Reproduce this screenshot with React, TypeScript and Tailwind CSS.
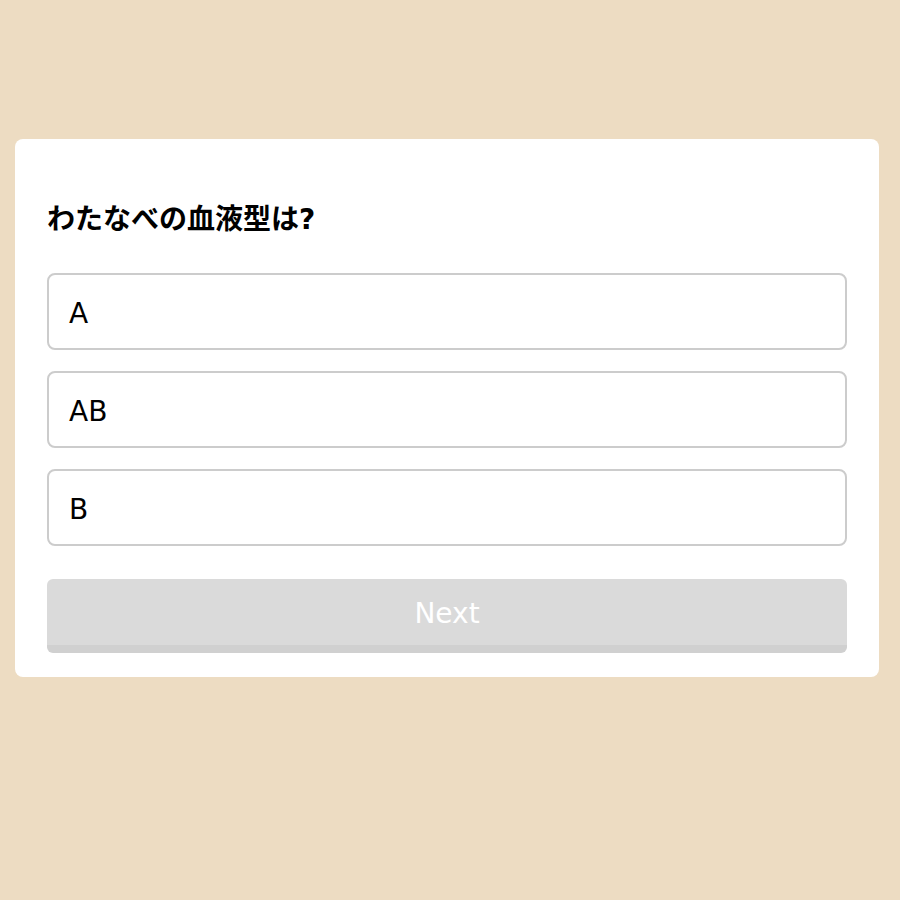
export default function App() {
  const opts = ["A", "AB", "B"];
  return (
    <div
      className="w-[900px] h-[900px] bg-[#eddcc2] pt-[139px] pl-[15px]"
      style={{ fontFamily: '"DejaVu Sans", "Noto Sans CJK JP", sans-serif' }}
    >
      <div className="w-[864px] bg-white rounded-lg px-8 pt-[56px] pb-6">
        <h1 className="text-[28px] font-bold text-black leading-[50px] h-[44px]">わたなべの血液型は?</h1>
        <div className="mt-[34px] flex flex-col gap-[21px]">
          {opts.map((o) => (
            <div
              key={o}
              className="h-[77px] border-2 border-[#cccccc] rounded-lg flex items-center pl-5 pt-[4px] text-[28px] text-black"
            >
              {o}
            </div>
          ))}
        </div>
        <div className="mt-[33px] h-[74px] rounded-md bg-[#dadada] border-b-[8px] border-[#d0d0d0] flex items-center justify-center text-white text-[28px] pt-[4px]">
          Next
        </div>
      </div>
    </div>
  );
}
